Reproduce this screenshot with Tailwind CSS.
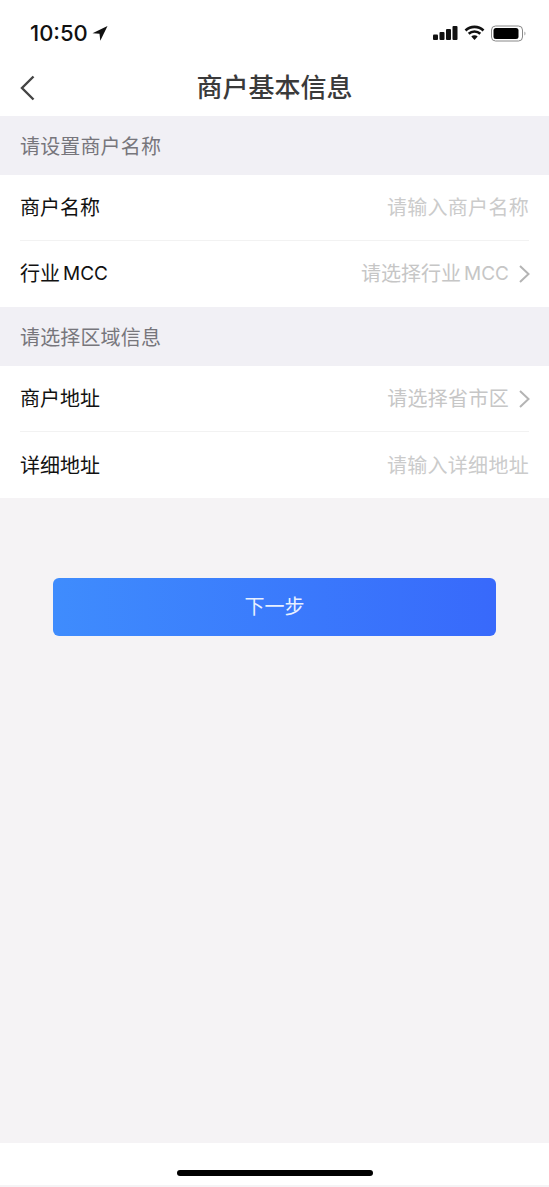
<!DOCTYPE html>
<html lang="zh-CN">
<head>
    <meta charset="UTF-8">
    <meta name="viewport" content="width=device-width, initial-scale=1.0">
    <title>商户基本信息</title>
    <script src="https://cdn.jsdelivr.net/npm/@tailwindcss/browser@4"></script>
</head>
<body class="bg-[#f5f3f5] font-['Inter','Noto_Sans_CJK_SC',sans-serif]">
<div class="flex flex-col w-[549px] h-[1187px] overflow-hidden">

    <!-- status bar -->
    <div class="flex items-center justify-between h-[66px] bg-white pl-[30px] pr-[22px]">
        <div class="flex items-center gap-[4px] text-[22px] font-medium text-[#111] leading-none">
            <span>10:50</span>
            <svg class="w-[16px] h-[16px]" viewBox="0 0 16 16"><path d="M15.5 1 .5 8.2l7 .6.8 6.9z" fill="#111"/></svg>
        </div>
        <div class="flex items-center gap-[6px]">
            <svg class="w-[25px] h-[16px]" viewBox="0 0 25 16" fill="#111">
                <rect x="0" y="9.5" width="5" height="5.5" rx="1"/>
                <rect x="6.5" y="7" width="5" height="8" rx="1"/>
                <rect x="13" y="4" width="5" height="11" rx="1"/>
                <rect x="19.5" y="1" width="5" height="14" rx="1"/>
            </svg>
            <svg class="w-[21px] h-[16px]" viewBox="0 0 21 16">
                <path d="M1.5 5.5a13 13 0 0 1 18 0M4.7 8.8a8.5 8.5 0 0 1 11.6 0" fill="none" stroke="#111" stroke-width="2.6"/>
                <path d="M7.3 11.5a4.6 4.6 0 0 1 6.4 0L10.5 15z" fill="#111"/>
            </svg>
            <svg class="w-[36px] h-[17px]" viewBox="0 0 36 17">
                <rect x="0.5" y="1" width="31" height="15" rx="4" fill="none" stroke="#888" stroke-width="1"/>
                <rect x="2.5" y="3" width="25" height="11" rx="2.5" fill="#000"/>
                <path d="M33.5 6.5c1.2.4 1.2 3.6 0 4z" fill="#888"/>
            </svg>
        </div>
    </div>

    <!-- nav bar -->
    <div class="relative flex items-center justify-center h-[50px] bg-white">
        <svg class="absolute left-[20px] top-[9px] w-[15px] h-[26px]" viewBox="0 0 15 26"><path d="M13.5 1.5 2 13l11.5 11.5" fill="none" stroke="#444" stroke-width="2.4"/></svg>
        <h1 class="text-[26px] font-medium text-[#3a3a3a] leading-none mb-[6px]">商户基本信息</h1>
    </div>

    <div class="flex items-center h-[59px] px-5 pt-[2px] bg-[#f1f0f5] text-[20px] tracking-[0.15px] text-[#77767c]">请设置商户名称</div>

    <div class="bg-white px-5">
        <div class="flex items-center justify-between h-[66px] border-b border-[#f2f2f2] pt-[1px]">
            <span class="text-[20px] text-[#111]">商户名称</span>
            <span class="text-[20px] tracking-[0.3px] text-[#cbcbcb]">请输入商户名称</span>
        </div>
        <div class="flex items-center justify-between h-[66px]">
            <span class="flex items-center gap-[3px] text-[20px] text-[#111]">行业<span class="text-[19px]">MCC</span></span>
            <span class="flex items-center gap-[10px] text-[20px] text-[#c6c6c6]">
                <span class="flex items-center gap-[3px]">请选择行业<span class="text-[19px]">MCC</span></span>
                <svg class="w-[11px] h-[18px] mr-[-1px]" viewBox="0 0 11 18"><path d="M1 1l8.5 8L1 17" fill="none" stroke="#b4b4b4" stroke-width="2"/></svg>
            </span>
        </div>
    </div>

    <div class="flex items-center h-[59px] px-5 pt-[2px] bg-[#f1f0f5] text-[20px] tracking-[0.15px] text-[#77767c]">请选择区域信息</div>

    <div class="bg-white px-5">
        <div class="flex items-center justify-between h-[66px] border-b border-[#f2f2f2]">
            <span class="text-[20px] text-[#111]">商户地址</span>
            <span class="flex items-center gap-[10px] text-[20px] tracking-[0.3px] text-[#c6c6c6]">请选择省市区
                <svg class="w-[11px] h-[18px] mr-[-1px]" viewBox="0 0 11 18"><path d="M1 1l8.5 8L1 17" fill="none" stroke="#b4b4b4" stroke-width="2"/></svg>
            </span>
        </div>
        <div class="flex items-center justify-between h-[66px] pt-[1px]">
            <span class="text-[20px] text-[#111]">详细地址</span>
            <span class="text-[20px] tracking-[0.3px] text-[#cbcbcb]">请输入详细地址</span>
        </div>
    </div>

    <!-- next step button -->
    <div class="px-[53px] pt-[80px]">
        <button class="w-full h-[58px] rounded-[6px] bg-gradient-to-r from-[#3f8cfd] to-[#3869fb] text-[20px] text-[#e8f0ff]">下一步</button>
    </div>

    <!-- home indicator -->
    <div class="flex justify-center mt-[507px] h-[42px] pt-[27px] bg-white">
        <div class="w-[196px] h-[6px] rounded-full bg-black"></div>
    </div>
</div>
</body>
</html>
